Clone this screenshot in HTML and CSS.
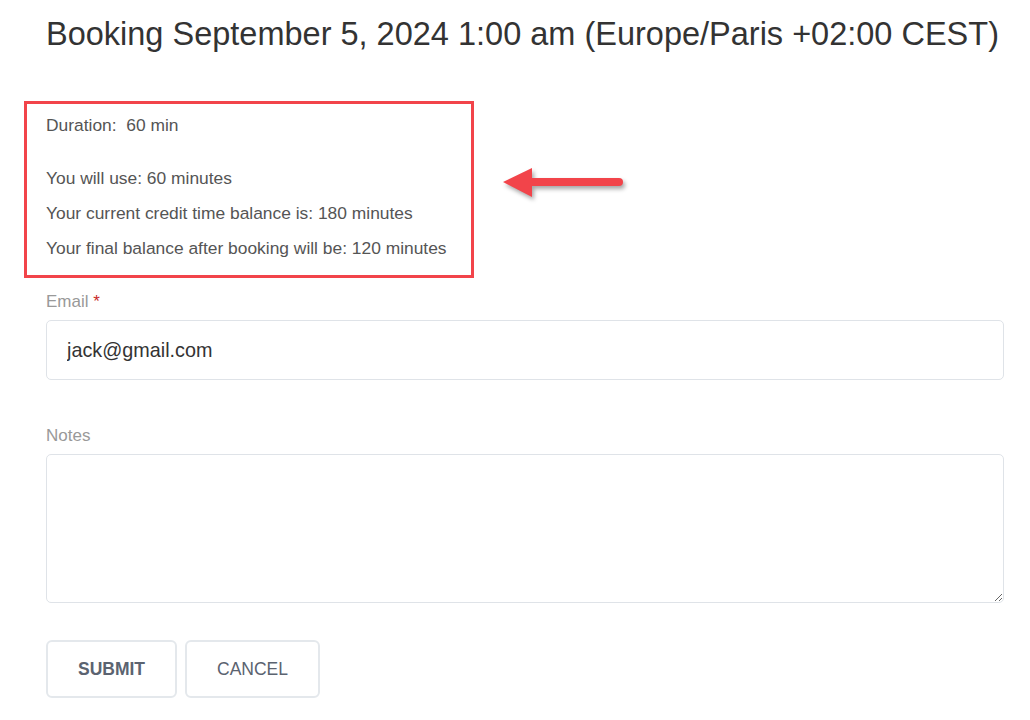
FILE: index.html
```html
<!DOCTYPE html>
<html>
<head>
    <title>Booking</title>
    <link rel="stylesheet" href="styles.css">
</head>
<body>
    <div id="page">
        <h1 class="title">Booking September 5, 2024 1:00 am (Europe/Paris +02:00 CEST)</h1>

        <div class="info-row">
            <div class="info-box">
                <div class="info-line duration">Duration:&nbsp; 60 min</div>
                <div class="info-line">You will use: 60 minutes</div>
                <div class="info-line">Your current credit time balance is: 180 minutes</div>
                <div class="info-line">Your final balance after booking will be: 120 minutes</div>
            </div>
            <svg class="arrow" width="132" height="44" viewBox="0 0 132 44">
                <line x1="34" y1="20" x2="122" y2="20" stroke="#f2444a" stroke-width="8" stroke-linecap="round"/>
                <polygon points="6,20 35,6 35,35" fill="#f2444a"/>
            </svg>
        </div>

        <form class="booking-form">
            <label class="field-label" for="email">Email <span class="req">*</span></label>
            <input type="text" id="email" class="field-input" value="jack@gmail.com">

            <label class="field-label notes-label" for="notes">Notes</label>
            <textarea id="notes" class="field-textarea"></textarea>

            <div class="buttons">
                <button type="button" class="btn btn-submit">SUBMIT</button>
                <button type="button" class="btn btn-cancel">CANCEL</button>
            </div>
        </form>
    </div>
</body>
</html>
```

FILE: styles.css
```css
body {
    font-family: "Liberation Sans", Arial, sans-serif;
    background-color: #fff;
    margin: 0;
    padding: 0;
}

#page {
    padding: 0 26px 0 46px;
}

.title {
    font-size: 32.5px;
    font-weight: normal;
    line-height: 1.15;
    color: #333;
    margin: 16px 0 0 0;
}

.info-row {
    display: flex;
    align-items: flex-start;
    margin-top: 48px;
}

.info-box {
    margin-left: -22px;
    width: 450px;
    box-sizing: border-box;
    border: 3px solid #f2444a;
    padding: 4px 19px 9px 19px;
    color: #555;
    font-size: 17.4px;
}

.info-line {
    line-height: 35px;
}

.duration {
    margin-bottom: 18px;
}

/* annotation arrow */
.arrow {
    margin: 61px 0 0 23px;
    filter: drop-shadow(2px 3px 2px rgba(0, 0, 0, 0.35));
}

.booking-form {
    display: flex;
    flex-direction: column;
}

.field-label {
    font-size: 17px;
    color: #999;
    line-height: 24px;
    margin-top: 12px;
    margin-bottom: 6px;
}

.req {
    color: #c92a2a;
}

.notes-label {
    margin-top: 44px;
}

.field-input {
    height: 60px;
    box-sizing: border-box;
    border: 1px solid #dfe3e8;
    border-radius: 5px;
    padding: 0 20px;
    font-family: "Liberation Sans", Arial, sans-serif;
    font-size: 19.8px;
    color: #333;
    outline: none;
}

.field-textarea {
    height: 149px;
    box-sizing: border-box;
    border: 1px solid #dfe3e8;
    border-radius: 5px;
    padding: 10px 20px;
    font-family: "Liberation Sans", Arial, sans-serif;
    font-size: 19.8px;
    outline: none;
}

.buttons {
    display: flex;
    gap: 8px;
    margin-top: 37px;
}

.btn {
    height: 58px;
    padding: 0;
    background-color: #fff;
    border: 2px solid #e4e8ec;
    border-radius: 6px;
    font-family: "Liberation Sans", Arial, sans-serif;
    font-size: 17.5px;
    color: #5b6370;
    cursor: pointer;
}

.btn-submit {
    font-weight: bold;
    width: 131px;
}

.btn-cancel {
    width: 135px;
}
```
